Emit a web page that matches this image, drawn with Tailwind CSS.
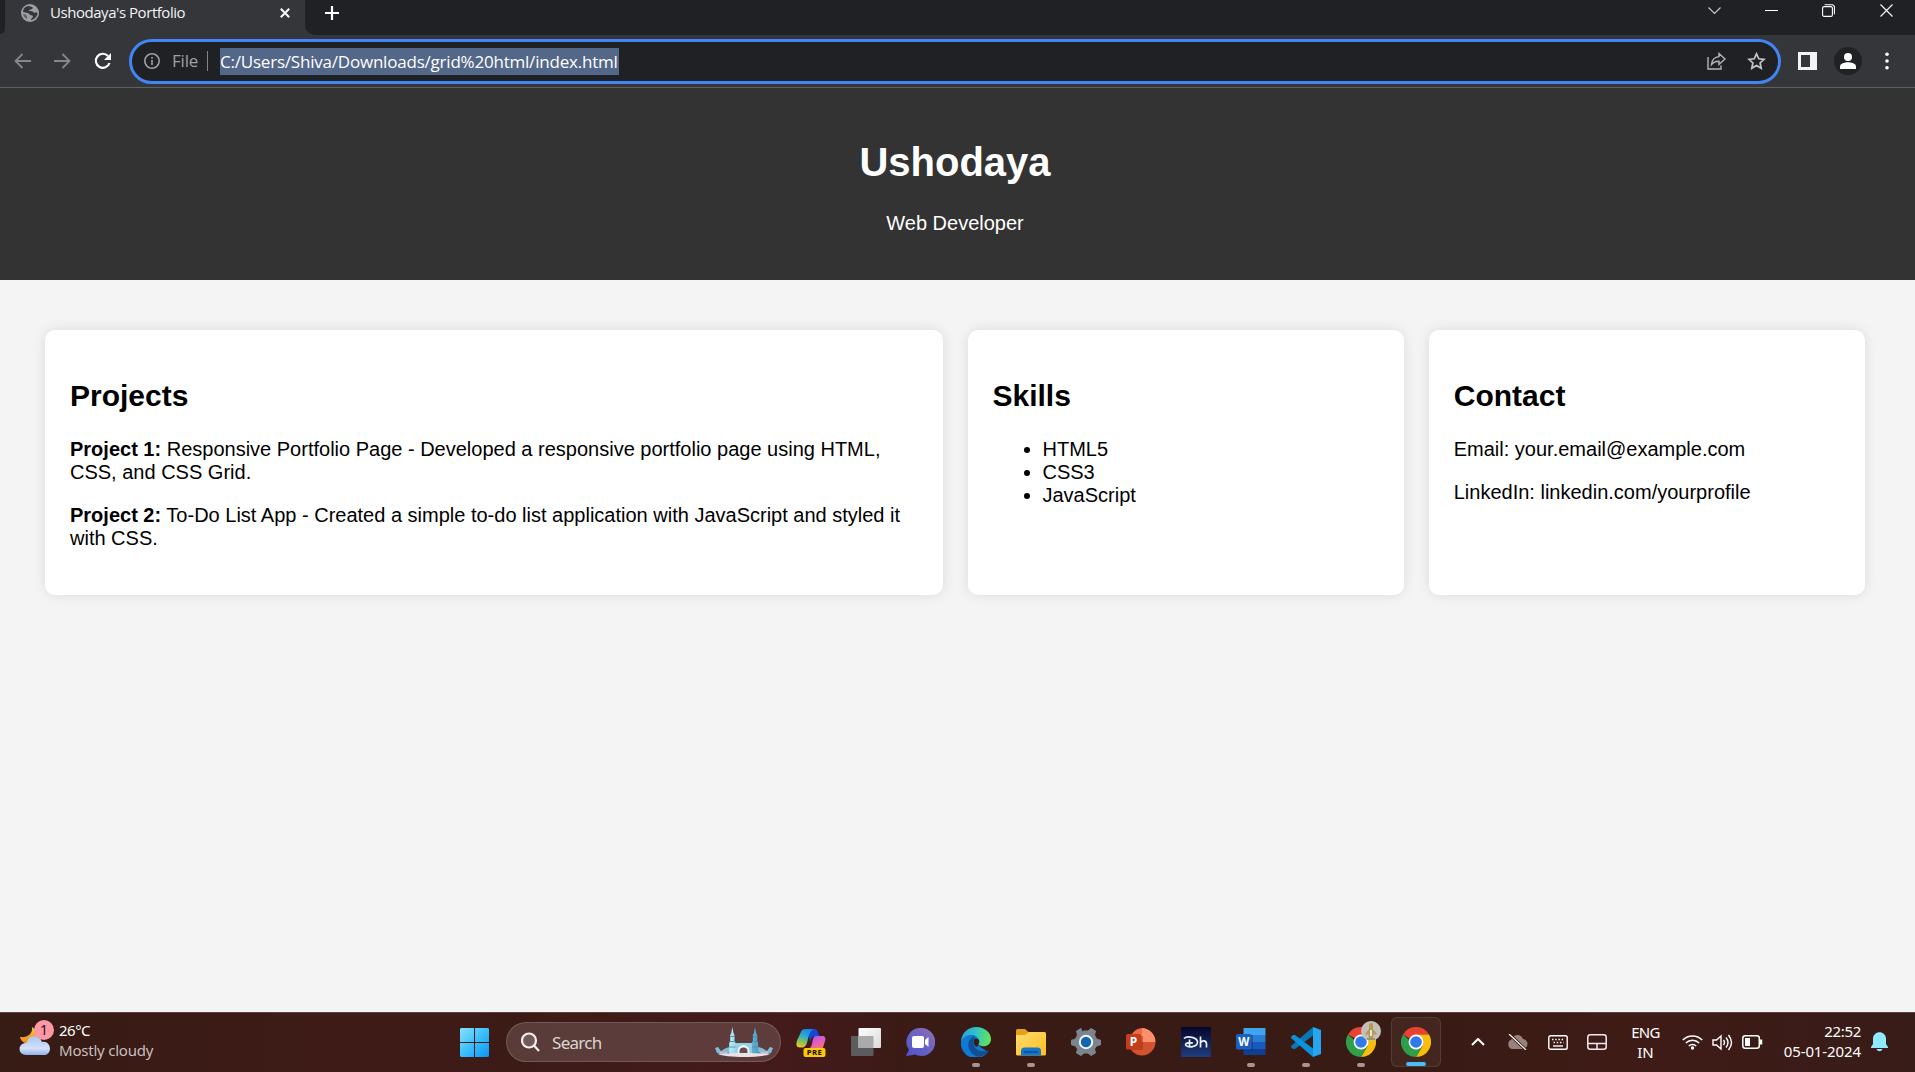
<!DOCTYPE html>
<html lang="en">
<head>
<meta charset="utf-8">
<title>Ushodaya's Portfolio</title>
<script src="https://cdn.jsdelivr.net/npm/@tailwindcss/browser@4"></script>
</head>
<body class="flex h-[1072px] w-[1915px] flex-col overflow-hidden bg-[#f4f4f4] font-['Liberation_Sans',Arial,sans-serif] text-black">

<!-- Tab strip -->
<div class="flex h-[35px] shrink-0 bg-[#202124] font-['Open_Sans',sans-serif]">
  <div class="flex w-[5px] bg-[#35363a]"><div class="h-[34px] w-[5px] rounded-br-[5px] bg-[#202124]"></div></div>
  <div class="flex h-[35px] w-[300px] items-start bg-[#35363a] pl-4 pt-1">
    <svg class="h-[18px] w-[18px]" viewBox="0 0 18 18"><circle cx="9" cy="9" r="9" fill="#9aa0a6"/><path d="M8 2c1 1 3 0 4 2-1 2-4 1-4 3 2 0 4 0 5 2 1-1 3-1 3.500 0-.5 4-3 6.500-6.500 7 0-2 2-2 2-4-1-1-3 0-3.500-2C7 9 4 8 2 8 2 5 4 2 8 2z" fill="#35363a"/><path d="M2 10c2 0 4 1 4 3v2C4 14 2.500 12 2 10z" fill="#35363a" opacity=".6"/></svg>
    <span class="ml-[11px] mt-[-2px] w-[136px] whitespace-nowrap text-[15px] leading-5 tracking-[-0.45px] text-[#f1f3f4]">Ushodaya's Portfolio</span>
    <svg class="ml-[94px] mt-1 h-[10px] w-[10px]" viewBox="0 0 10 10" fill="none" stroke="#fff" stroke-width="2"><path d="M.8.8l8.400 8.400M9.200.8L.8 9.200"/></svg>
  </div>
  <div class="w-[10px] bg-[#35363a]"><div class="h-[35px] w-[10px] rounded-bl-[10px] bg-[#202124]"></div></div>
  <svg class="ml-[10px] mt-[6px] h-[14px] w-[14px]" viewBox="0 0 14 14" stroke="#fff" stroke-width="2.200"><path d="M7 0v14M0 7h14"/></svg>
  <div class="ml-auto flex pr-[22px]">
    <svg class="mt-[7px] h-[8px] w-[13px]" viewBox="0 0 13 8" fill="none" stroke="#c8c8c8" stroke-width="1.200"><path d="M.5.5l6 6 6-6"/></svg>
    <div class="ml-11 mt-[10px] h-px w-[13px] bg-white"></div>
    <svg class="ml-11 mt-1 h-[13px] w-[13px]" viewBox="0 0 13 13" fill="none" stroke="#fff" stroke-width="1.100"><rect x=".6" y="2.600" width="9.800" height="9.800" rx="1.500"/><path d="M2.600.7H10a2.400 2.400 0 0 1 2.400 2.400v7.200"/></svg>
    <svg class="ml-[45px] mt-1 h-[13px] w-[13px]" viewBox="0 0 13 13" stroke="#f2f2f2" stroke-width="1.200"><path d="M.5.5l12 12M12.500.5l-12 12"/></svg>
  </div>
</div>

<!-- Toolbar -->
<div class="flex h-[53px] shrink-0 items-center border-b border-[#5f6064] bg-[#35363a] font-['Open_Sans',sans-serif]">
  <svg class="ml-[14px] h-4 w-[17px]" viewBox="0 0 17 16" fill="none" stroke="#85878b" stroke-width="1.800"><path d="M17 8H2M8.500 1L1.500 8l7 7"/></svg>
  <svg class="ml-[23px] h-4 w-[17px]" viewBox="0 0 17 16" fill="none" stroke="#85878b" stroke-width="1.800"><path d="M0 8h15M8.500 1l7 7-7 7"/></svg>
  <svg class="ml-[23px] h-[18px] w-[18px]" viewBox="0 0 18 18" fill="none" stroke="#fff" stroke-width="2.200"><path d="M15.500 11A7 7 0 1 1 14 4"/><path d="M17 1v7h-7z" fill="#fff" stroke="none"/></svg>
  <div class="ml-[17px] flex h-[45px] w-[1652px] items-center rounded-full border-[3px] border-[#4285f4] bg-[#202124]">
    <svg class="ml-[12px] h-4 w-4" viewBox="0 0 16 16" fill="none" stroke="#9aa0a6" stroke-width="1.600"><circle cx="8" cy="8" r="7.200"/><path d="M8 7v5M8 4v1.700"/></svg>
    <span class="ml-3 w-[27px] whitespace-nowrap text-[17px] leading-6 tracking-[-0.2px] text-[#9aa0a6]">File</span>
    <div class="ml-2 h-5 w-px bg-[#80868b]"></div>
    <span class="ml-[12px] h-[27px] w-[399px] whitespace-nowrap bg-[#536788] text-[17px] leading-[27px] tracking-[-0.21px] text-white">C:/Users/Shiva/Downloads/grid%20html/index.html</span>
    <svg class="ml-auto h-[18px] w-[19px]" viewBox="0 0 19 18" fill="none" stroke="#b4b6b9" stroke-width="1.400"><path d="M1 5v12h13v-3.500"/><path d="M12 1.500L18 7l-6 5.500V9.200C8.500 9 6.500 10 4.500 12.500 5 8 7.500 5 12 4.600z"/></svg>
    <svg class="ml-[21px] mr-3 h-[18px] w-[19px]" viewBox="0 0 19 18" fill="none" stroke="#c4c6c8" stroke-width="1.700"><path d="M9.500 1.800l2.300 5 5.200.6-3.900 3.600 1.100 5.300-4.700-2.700-4.700 2.700L5.900 11 2 7.400l5.200-.6z"/></svg>
  </div>
  <svg class="ml-[17px] h-[18px] w-[19px]" viewBox="0 0 19 18"><path fill="#f1f3f4" d="M0 0h19v18H0z"/><path fill="#35363a" d="M3 3h9v12H3z"/></svg>
  <svg class="ml-[17px] h-7 w-7" viewBox="0 0 28 28"><circle cx="14" cy="14" r="14" fill="#202124"/><circle cx="14" cy="10" r="4" fill="#fff"/><path fill="#fff" d="M6 22v-2.500c0-3 5-4.300 8-4.300s8 1.300 8 4.300V22z"/></svg>
  <svg class="ml-[23px] h-[18px] w-1" viewBox="0 0 4 18" fill="#fff"><circle cx="2" cy="2.200" r="1.800"/><circle cx="2" cy="9" r="1.800"/><circle cx="2" cy="15.800" r="1.800"/></svg>
</div>

<!-- Portfolio page -->
<header class="flex h-[192px] shrink-0 flex-col items-center bg-[#333] pr-[5px] pt-[51px] text-white">
  <h1 class="text-[40px] font-bold leading-[46px]">Ushodaya</h1>
  <p class="mt-[27px] text-[20px] leading-[23px]">Web Developer</p>
</header>
<main class="grid h-[732px] shrink-0 grid-cols-4 content-start gap-[25px] pl-[45px] pr-[50px] pt-[50px] text-[20px] leading-[23px]">
  <section class="col-span-2 h-[265px] rounded-[10px] bg-white px-[25px] pt-[49px] shadow-[0_0_12.5px_rgba(0,0,0,0.1)]">
    <h2 class="text-[30px] font-bold leading-[34px]">Projects</h2>
    <p class="mt-[25px]"><b>Project 1:</b> Responsive Portfolio Page - Developed a responsive portfolio page using HTML, CSS, and CSS Grid.</p>
    <p class="mt-5"><b>Project 2:</b> To-Do List App - Created a simple to-do list application with JavaScript and styled it with CSS.</p>
  </section>
  <section class="h-[265px] rounded-[10px] bg-white px-[25px] pt-[49px] shadow-[0_0_12.5px_rgba(0,0,0,0.1)]">
    <h2 class="text-[30px] font-bold leading-[34px]">Skills</h2>
    <ul class="mt-[25px] list-disc pl-[50px]"><li>HTML5</li><li>CSS3</li><li>JavaScript</li></ul>
  </section>
  <section class="h-[265px] rounded-[10px] bg-white px-[25px] pt-[49px] shadow-[0_0_12.5px_rgba(0,0,0,0.1)]">
    <h2 class="text-[30px] font-bold leading-[34px]">Contact</h2>
    <p class="mt-[25px]">Email: your.email@example.com</p>
    <p class="mt-5">LinkedIn: linkedin.com/yourprofile</p>
  </section>
</main>

<!-- Taskbar -->
<footer class="flex h-[60px] shrink-0 border-t border-[#5b4340] bg-[linear-gradient(90deg,#371b15_0%,#3f1b17_20%,#3c1b16_27%,#441a1b_41%,#371b14_50%,#371b14_72%,#3f1b16_85%,#381c18_100%)] font-['Noto_Sans','Open_Sans',sans-serif] text-white">
  <div class="flex w-[460px]">
    <svg class="ml-[19px] mt-[6px] h-[38px] w-[37px]" viewBox="0 0 37 38">
      <defs><linearGradient id="cl" x2="0" y2="1"><stop stop-color="#a9c5f5"/><stop offset=".65" stop-color="#d5e1f7"/><stop offset="1" stop-color="#8db0f0"/></linearGradient><linearGradient id="mn" x2="0" y2="1"><stop stop-color="#f5c63c"/><stop offset="1" stop-color="#f0891d"/></linearGradient></defs>
      <path d="M13 8c8 5 7 15-2 17-6 0-9-3-10-7 7 1 13-3 12-10z" fill="url(#mn)"/>
      <path d="M7 36a6 6 0 0 1-1-12c2 0 2-1 2-1 2-7 12-8 15 0 5-1 8 3 8 7-.4 4-3 6-6 6z" fill="url(#cl)"/>
      <circle cx="25" cy="11" r="10" fill="#ff97a5"/><text x="25" y="16.300" text-anchor="middle" font-size="14" fill="#321014">1</text>
    </svg>
    <div class="ml-[3px] mt-[7px] text-[15px] leading-5">
      <div class="tracking-[-0.5px]">26°C</div><div class="whitespace-nowrap text-[#c9bfbd] tracking-[-0.22px]">Mostly cloudy</div>
    </div>
  </div>
  <svg class="mt-[15px] h-[29px] w-[29px]" viewBox="0 0 29 29"><defs><linearGradient id="wn" x2="1" y2="1"><stop stop-color="#8be0ff"/><stop offset=".5" stop-color="#3bc0fb"/><stop offset="1" stop-color="#0a93f5"/></linearGradient></defs><path d="M1 0h13v14H0V1zM15 0h13l1 1v13H15zM0 15h14v14H1l-1-1zM15 15h14v13l-1 1H15z" fill="url(#wn)"/></svg>
  <div class="ml-[17px] mt-[9px] flex h-10 w-[275px] items-center rounded-full border border-white/15 bg-white/15 pl-[14px] pr-[7px]">
    <svg class="h-5 w-[19px]" viewBox="0 0 19 20" fill="none" stroke="#f2eeee" stroke-width="2.200"><circle cx="8" cy="8.500" r="7" fill="#735a59"/><path d="M13 13.500l5 5.500"/></svg>
    <span class="ml-3 mt-px text-[17px] leading-6 tracking-[-0.7px] text-[#ddd4d3]">Search</span>
    <svg class="ml-auto h-[32px] w-[58px]" viewBox="0 0 58 32">
      <defs><linearGradient id="tw"><stop stop-color="#b7ebf5"/><stop offset="1" stop-color="#4c9fc5"/></linearGradient></defs>
      <path d="M0 22l3-1 3 4 5-3 4-1v5l-6 3-7-2zM58 22l-3-1-3 4-5-3-4-1v5l6 3 7-2z" fill="#7dbdd8"/>
      <path d="M20 17h18v11H20z" fill="#94cfe4"/>
      <path d="M14.200 28V17l1-2V9l1-2L17.300 1l1.200 6 1 2v6l1 2v11zM36.900 28V17l1-2V9l1-2L40 1l1.200 6 1 2v6l1 2v11z" fill="url(#tw)"/>
      <path d="M15.200 10.500h4.500M14.500 15.500h6M14.500 21h6M38 10.500h4.500M37 15.500h6M37 21h6" stroke="#478eae" stroke-width=".9"/>
      <path d="M22.500 28v-3a6 6 0 0 1 12 0v3z" fill="#e3f6fb"/><path d="M24.500 28v-2.500a4 4 0 0 1 8 0V28z" fill="#6c4a52"/><path d="M5 26.500h7M46 26.500h7" stroke="#e2b4c8" stroke-width="1.500"/><path d="M3 28c8-1.500 44-1.500 52 0-7 4-45 4-52 0z" fill="#e9e2e6"/>
    </svg>
  </div>
  <!-- Pinned and running apps -->
  <div class="ml-[2px] grid w-[660px] grid-cols-[repeat(12,55px)] pt-[4px]">
    <div class="flex flex-col items-center pt-[10px]"><svg class="h-[32px] w-[30px]" viewBox="0 0 30 32">
      <defs><linearGradient id="c1" x1=".6" x2=".3" y2="1"><stop stop-color="#1b84ec"/><stop offset=".35" stop-color="#25a9d5"/><stop offset=".65" stop-color="#6fc06a"/><stop offset="1" stop-color="#f0c51c"/></linearGradient><linearGradient id="c2" x2=".6" y2="1"><stop stop-color="#9d55ee"/><stop offset=".5" stop-color="#db5bd0"/><stop offset="1" stop-color="#f2766e"/></linearGradient></defs>
      <path d="M12 2h6.500c3 0 3 3 5 7H19c-3 0-4 3-5 6z" fill="#1548d5"/><path d="M9.500 2H18c-4 1-5 6-6.500 12-1 4-2.500 6.500-5.500 6.500H4c-4 0-4-3-3-7L4.500 6c1-3 2-4 5-4z" fill="url(#c1)"/><path d="M20 9h6c3 0 4 2 3 5l-2.500 8H12c4-1 4-6 5-10 1-2 1-3 3-3z" fill="url(#c2)"/>
      <rect x="7.500" y="21" width="22" height="9" rx="2" fill="#ffc90a"/><text x="18.500" y="28.200" text-anchor="middle" font-size="7.800" font-weight="800" letter-spacing=".3" fill="#1d1608">PRE</text></svg></div>
    <div class="flex flex-col items-center pt-[11px]"><svg class="h-7 w-[30px]" viewBox="0 0 30 28"><defs><linearGradient id="tv" x2="1" y2="1"><stop stop-color="#fff"/><stop offset="1" stop-color="#d9d9d9"/></linearGradient></defs><rect y="8" width="22.500" height="20" rx="1" fill="#5c5c5c"/><rect x="7.500" width="22.500" height="20" rx="1" fill="url(#tv)"/><path d="M7.500 8h15v12h-15z" fill="#aaa"/></svg></div>
    <div class="flex flex-col items-center pt-[11px]"><svg class="h-[29px] w-[29px]" viewBox="0 0 29 29"><defs><linearGradient id="ch" x1="1" x2="0" y2="1"><stop stop-color="#946eb4"/><stop offset=".5" stop-color="#6863c5"/><stop offset="1" stop-color="#5251ce"/></linearGradient></defs><path d="M15 0a14 14 0 1 1-6 26.500L1 28c-1 0-1-1-.5-1.500L3 22A14 14 0 0 1 15 0z" fill="url(#ch)"/><rect x="6" y="8" width="12" height="12" rx="2" fill="#fff"/><path d="M19 12l3.500-3v10L19 16z" fill="#fff"/></svg></div>
    <div class="flex flex-col items-center pt-[10px]"><svg class="h-[30px] w-[30px]" viewBox="0 0 30 30"><defs><linearGradient id="e1" y1=".4" x2="1" y2=".5"><stop stop-color="#2a9fdf"/><stop offset=".5" stop-color="#31c5c3"/><stop offset="1" stop-color="#67e550"/></linearGradient></defs><path d="M0 14a15 15 0 0 1 18-9v14l9 6A15 15 0 0 1 0 14z" fill="#0d7bd3"/><path d="M14 9.500c-6 1-8 7-6 12 2 5 6 8 10 8.200 5-.5 8-3.200 10-6.200-1-.5-8 3-13-2-3-3-3-8-1-12z" fill="#124e91"/><path d="M0 14C1 5 8 0 15 0c9 0 15 6 15 12 0 7-8 9-12 6-1-1 1-2 0-5C15 6 5 6 0 14z" fill="url(#e1)"/><path d="M13.500 12c2-1 4 0 4.500 1.500.6 2-1 3-.5 4.500l-2 2c-3-2-3-6-2-8z" fill="#371b14"/></svg><i class="mt-[6px] h-1 w-2 rounded-full bg-[#a99490]"></i></div>
    <div class="flex flex-col items-center pt-[10px]"><svg class="h-[30px] w-[30px]" viewBox="0 0 30 30"><defs><linearGradient id="fo" x2="1" y2="1"><stop stop-color="#ffdc72"/><stop offset="1" stop-color="#ffbe1c"/></linearGradient></defs><path d="M0 3.500Q0 2 1.500 2H9l4 3.500L9 12H0z" fill="#e6a015"/><path d="M0 8h9l4-3h15.500Q30 5 30 6.500V27q0 1.500-1.500 1.500h-27Q0 28.500 0 27z" fill="url(#fo)"/><path d="M5 28.500V24q0-3.500 3.500-3.500h13q3.500 0 3.500 3.500v4.500z" fill="#1676ca"/><path d="M8 25h14" stroke="#0b4e94" stroke-width="1.500"/></svg><i class="mt-[6px] h-1 w-2 rounded-full bg-[#a99490]"></i></div>
    <div class="flex flex-col items-center pt-[10px]"><svg class="h-[30px] w-[30px]" viewBox="0 0 30 30"><path d="M11 5L10 1.500 5.500 4l1 4-2 4L0 13.500v4L4.500 19l2 3-1 4L10 28.500l3-2.500h4l3 2.500 4.500-2.500-1-4 2-3 4.500-1.500v-4L25.500 12l-2-4 1-4L20 1.500 17 4h-4z" fill="#7c858f" stroke="#7c858f" stroke-linejoin="round"/><circle cx="15" cy="15" r="6.200" fill="#1265b3" stroke="#f3f7fa" stroke-width="2"/></svg></div>
    <div class="flex flex-col items-center pt-[10px]"><svg class="h-[30px] w-[30px]" viewBox="0 0 30 30"><path d="M16 1a14 14 0 0 1 13.500 14L16 17z" fill="#ff8f6b"/><path d="M16 1v14H4A13 13 0 0 1 16 1z" fill="#ed6c47"/><path d="M2.500 15h27a13.500 13.500 0 0 1-27 0z" fill="#d35230"/><path d="M4 9h13v14H4z" fill="#872610" opacity=".4"/><rect y="7" width="15" height="15.500" rx="1.500" fill="#c43e1c"/><text x="7.500" y="18.800" text-anchor="middle" font-size="12" font-weight="700" fill="#fff">P</text></svg></div>
    <div class="flex flex-col items-center pt-[10px]"><svg class="h-[30px] w-[30px]" viewBox="0 0 30 30"><defs><linearGradient id="dh" x2="0" y2="1"><stop stop-color="#05072b"/><stop offset="1" stop-color="#1f3c7d"/></linearGradient></defs><path d="M0 0h30v30H0z" fill="url(#dh)"/><path d="M3 11.500c3-3 14-1.500 13.500 4-.5 4.500-9 5.500-11.500 3-2-2 3-3.500 7-2.500M8.500 12.500v8M19.500 9.500v11M19.500 16c1-3 6-3 6 1v3.500" fill="none" stroke="#eef1fa" stroke-width="1.700"/></svg></div>
    <div class="flex flex-col items-center pt-[10px]"><svg class="h-[30px] w-[30px]" viewBox="0 0 30 30"><path d="M7.500 1h22v7h-22z" fill="#41a5ee"/><path d="M7.500 8h22v7h-22z" fill="#2b7cd3"/><path d="M7.500 15h22v7h-22z" fill="#185abd"/><path d="M7.500 22h22v6h-22z" fill="#103f91"/><rect x="5" y="8" width="12" height="16" fill="#072a65" opacity=".4"/><rect y="7" width="15.500" height="15.500" rx="1.500" fill="#1b5fc1"/><text x="7.800" y="18.800" text-anchor="middle" font-size="11.500" font-weight="700" fill="#fff">W</text></svg><i class="mt-[6px] h-1 w-2 rounded-full bg-[#a99490]"></i></div>
    <div class="flex flex-col items-center pt-[10px]"><svg class="h-[30px] w-[30px]" viewBox="0 0 30 30"><path d="M22 0v8.500L4 22 2 22 0 20V19z" fill="#0877b9"/><path d="M22 30v-8.500L4 8H2L0 10v1z" fill="#0a93dc"/><path d="M22 0l8 3v24l-8 3z" fill="#27a5f0"/></svg><i class="mt-[6px] h-1 w-2 rounded-full bg-[#a99490]"></i></div>
    <div class="relative flex flex-col items-center pt-[10px]"><svg class="h-[30px] w-[30px]" viewBox="0 0 30 30"><path d="M15 15L2 7.500A15 15 0 0 1 28 7.500H15z" fill="#e94235"/><path d="M15 7.500h13A15 15 0 0 1 15 30l6.500-11z" fill="#fbbd0b"/><path d="M2 7.500A15 15 0 0 0 15 30l6.500-11H15z" fill="#2f9f4b"/><circle cx="15" cy="15" r="7.400" fill="#fff"/><circle cx="15" cy="15" r="5.800" fill="#2f79e8"/></svg>
      <svg class="absolute left-[28px] top-[4px] h-5 w-5" viewBox="0 0 20 20"><circle cx="10" cy="10" r="10" fill="#c3c1b7"/><path d="M8 5c-1-4 5-4 4 0v3l4 5-2 1-1-2-1 5H8l-1-5-1 2-2-1 4-5z" fill="#b39b56"/><path d="M9 9h2v6H9z" fill="#e8e4da"/><path d="M6 18h8" stroke="#8a794e" stroke-width="1.300"/></svg><i class="mt-[6px] h-1 w-2 rounded-full bg-[#a99490]"></i></div>
    <div class="mx-auto flex h-[50px] w-[50px] flex-col items-center rounded-md border border-white/10 bg-white/5 pt-[9px]"><svg class="h-[30px] w-[30px] shrink-0" viewBox="0 0 30 30"><path d="M15 15L2 7.500A15 15 0 0 1 28 7.500H15z" fill="#e94235"/><path d="M15 7.500h13A15 15 0 0 1 15 30l6.500-11z" fill="#fbbd0b"/><path d="M2 7.500A15 15 0 0 0 15 30l6.500-11H15z" fill="#2f9f4b"/><circle cx="15" cy="15" r="7.400" fill="#fff"/><circle cx="15" cy="15" r="5.800" fill="#2f79e8"/></svg><i class="mt-[5px] h-1 w-5 shrink-0 rounded-full bg-[#4cbcf8]"></i></div>
  </div>
  <!-- System tray -->
  <div class="ml-auto flex h-[58px] w-[471px] items-center text-[15px] leading-5">
    <svg class="ml-[27px] h-2 w-[14px]" viewBox="0 0 14 8" fill="none" stroke="#fff" stroke-width="2"><path d="M1 7l6-6 6 6"/></svg>
    <svg class="ml-[22px] h-4 w-[21px]" viewBox="0 0 21 16"><path d="M5 15a5 5 0 0 1-.5-9.500C6 0 14-1 16 5c6 1 6 9 0 10z" fill="#98817d"/><path d="M2 0l17 16" stroke="#371b14" stroke-width="3"/><path d="M2 0l17 16" stroke="#eee" stroke-width="1.300"/></svg>
    <svg class="ml-[20px] h-[15px] w-5" viewBox="0 0 20 15" fill="none" stroke="#fff" stroke-width="1.400"><rect x=".8" y=".8" width="18.400" height="13.400" rx="1.800"/><path d="M4 4.500h12M5.500 7.500h10" stroke-dasharray="1.500 1.700" stroke-width="1.600"/><path d="M5 11h10"/></svg>
    <svg class="ml-[19px] h-4 w-5" viewBox="0 0 20 16" fill="none" stroke="#f5e8f0" stroke-width="1.500"><rect x=".8" y=".8" width="18.400" height="14.400" rx="2.500"/><path d="M1 9.500h18M10 9.500V15"/></svg>
    <div class="ml-[24px] w-[29px] whitespace-nowrap text-center"><div class="tracking-[-0.7px]">ENG</div><div>IN</div></div>
    <svg class="ml-[22px] h-4 w-[21px]" viewBox="0 0 21 16" fill="none" stroke="#fff" stroke-width="1.500"><path d="M.8 6a13.500 13.500 0 0 1 19.400 0M3.800 9a9.500 9.500 0 0 1 13.400 0M6.800 12a5.200 5.200 0 0 1 7.400 0"/><circle cx="10.500" cy="14" r="1.700" fill="#fff" stroke="none"/></svg>
    <svg class="ml-[9px] h-[17px] w-[21px]" viewBox="0 0 21 17" fill="none" stroke="#fff" stroke-width="1.400"><path d="M1 6h3.500L9 2v13l-4.500-4H1z"/><path d="M11.500 6q2 2.500 0 5M14 3.500q4 5 0 10M16.500 1q6 7.500 0 15"/></svg>
    <svg class="ml-[9px] h-[14px] w-[21px]" viewBox="0 0 21 14" fill="none" stroke="#fff" stroke-width="1.500"><rect x=".8" y=".8" width="16.500" height="12.400" rx="2.500"/><path d="M3 3h5v8H3z" fill="#fff" stroke="none"/><path d="M19 4.500v5" stroke-width="2.500"/></svg>
    <div class="mb-[2px] ml-auto whitespace-nowrap text-right tracking-[-0.1px]"><div class="tracking-[-0.3px]">22:52</div><div>05-01-2024</div></div>
    <svg class="ml-[10px] mr-[27px] h-5 w-[17px]" viewBox="0 0 17 20" fill="#8eeaff"><path d="M0 16v-1l2-3V7c0-9 13-9 13 0v5l2 3v1zM5.500 17h6c-1 3-5 3-6 0z"/></svg>
  </div>
</footer>
</body>
</html>
